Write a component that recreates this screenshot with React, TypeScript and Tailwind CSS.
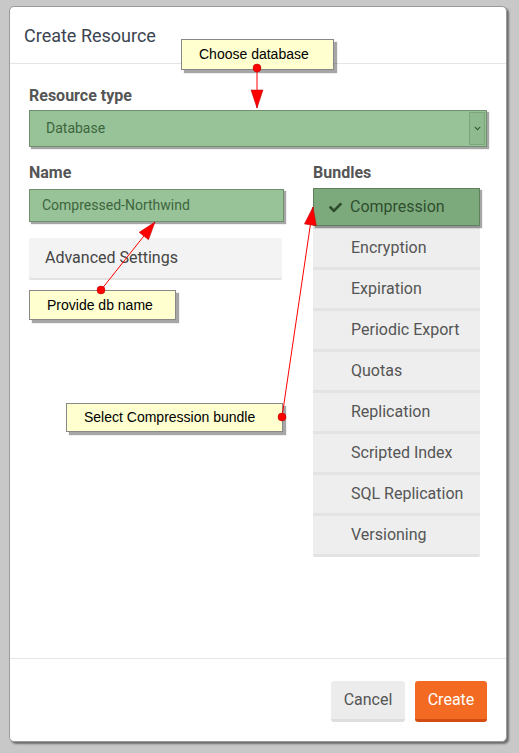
import { FaCheck, FaChevronDown } from 'react-icons/fa'

const bundles = [
  'Encryption',
  'Expiration',
  'Periodic Export',
  'Quotas',
  'Replication',
  'Scripted Index',
  'SQL Replication',
  'Versioning',
]

type Note = { text: string; x: number; y: number; w: number; h: number; pad: number }

const notes: Note[] = [
  { text: 'Choose database', x: 181, y: 39, w: 153, h: 31, pad: 17 },
  { text: 'Provide db name', x: 29, y: 290, w: 147, h: 30, pad: 17 },
  { text: 'Select Compression bundle', x: 66, y: 403, w: 217, h: 29, pad: 17 },
]

function arrowHead(x1: number, y1: number, x2: number, y2: number, len = 18, half = 6) {
  const dx = x2 - x1
  const dy = y2 - y1
  const d = Math.hypot(dx, dy)
  const ux = dx / d
  const uy = dy / d
  const bx = x2 - ux * len
  const by = y2 - uy * len
  return `${x2},${y2} ${bx - uy * half},${by + ux * half} ${bx + uy * half},${by - ux * half}`
}

const arrows = [
  { from: [257, 68], to: [257, 108] },
  { from: [101, 290], to: [155, 222] },
  { from: [282, 417], to: [313, 207] },
]

export default function App() {
  return (
    <div className="relative h-[753px] w-[519px] overflow-hidden bg-[#c8c8c8] font-['Roboto',sans-serif]">
      <div className="h-[6px]" />
      <div className="ml-[9px] flex h-[736px] w-[498px] flex-col rounded-[5px] border border-[#9a9a9a] bg-white shadow-[2px_2px_2px_rgba(0,0,0,0.45)]">
        <div className="flex h-[57px] shrink-0 items-center border-b border-[#e5e5e5] px-[14px]">
          <h1 className="text-[18px] text-[#3b4450]">Create Resource</h1>
        </div>

        <div className="flex-1 px-[19px] pt-[22px]">
          <div className="text-[16px] font-bold leading-[20px] text-[#555]">Resource type</div>
          <div className="mt-[4px] flex h-[37px] w-[458px] items-center justify-between border border-[#6f8f6f] bg-[#98c298] pl-[16px] shadow-[2px_2px_1px_rgba(0,0,0,0.35)]">
            <span className="text-[14px] text-[#3d663d]">Database</span>
            <div className="mr-[1px] flex h-[33px] w-[16px] items-center justify-center border border-[#7fa27f] bg-[#8fba8f]">
              <FaChevronDown className="h-[7px] w-[7px] text-[#2f552f]" />
            </div>
          </div>

          <div className="mt-[16px] flex gap-[29px]">
            <div className="w-[255px]">
              <div className="text-[16px] font-bold leading-[20px] text-[#555]">Name</div>
              <div className="mt-[6px] flex h-[33px] w-[255px] items-center border border-[#6f8f6f] bg-[#98c298] pl-[12px] shadow-[2px_2px_1px_rgba(0,0,0,0.35)]">
                <span className="text-[14px] text-[#3d663d]">Compressed-Northwind</span>
              </div>
              <div className="mt-[16px] flex h-[40px] w-[253px] items-center rounded-[2px] bg-[#f3f3f3] pl-[16px] shadow-[0_2px_0_#e2e2e2]">
                <span className="text-[16px] text-[#444]">Advanced Settings</span>
              </div>
            </div>

            <div className="w-[167px]">
              <div className="text-[16px] font-bold leading-[20px] text-[#555]">Bundles</div>
              <div className="mt-[5px] rounded-[2px] bg-[#e3e3e3] pb-[3px]">
                <div className="flex h-[38px] items-center gap-[8px] border border-[#5f7f5f] bg-[#7daa7d] pl-[15px] shadow-[2px_2px_1px_rgba(0,0,0,0.35)]">
                  <FaCheck className="h-[13px] w-[13px] text-[#2d4d2d]" />
                  <span className="text-[16px] text-[#2f4f2f]">Compression</span>
                </div>
                {bundles.map((b) => (
                  <div
                    key={b}
                    className="mt-[3px] flex h-[38px] items-center bg-[#eeeeee] pl-[38px] text-[16px] text-[#555]"
                  >
                    {b}
                  </div>
                ))}
              </div>
            </div>
          </div>
        </div>

        <div className="flex h-[83px] shrink-0 items-center justify-end gap-[10px] border-t border-[#e5e5e5] pr-[19px] pt-[2px]">
          <button className="h-[41px] w-[74px] rounded-[3px] border-b-[3px] border-[#dedede] bg-[#ececec] text-[16px] text-[#555]">
            Cancel
          </button>
          <button className="h-[41px] w-[72px] rounded-[3px] border-b-[3px] border-[#d24d14] bg-[#f36a22] text-[16px] text-white">
            Create
          </button>
        </div>
      </div>

      {notes.map((n) => (
        <div
          key={n.text}
          className="absolute flex items-center border border-[#888] bg-[#ffffd0] font-['Liberation_Sans',Arial,sans-serif] text-[14px] text-black shadow-[3px_3px_1px_rgba(0,0,0,0.35)]"
          style={{ left: n.x, top: n.y, width: n.w, height: n.h, paddingLeft: n.pad }}
        >
          {n.text}
        </div>
      ))}

      <svg className="pointer-events-none absolute left-0 top-0" width={519} height={753}>
        {arrows.map((a, i) => (
          <g key={i}>
            <line x1={a.from[0]} y1={a.from[1]} x2={a.to[0]} y2={a.to[1]} stroke="#ff0000" strokeWidth={1} />
            <polygon points={arrowHead(a.from[0], a.from[1], a.to[0], a.to[1])} fill="#ff0000" stroke="#b00000" strokeWidth={0.5} />
            <circle cx={a.from[0]} cy={a.from[1]} r={4} fill="#ff0000" stroke="#b00000" strokeWidth={0.5} />
          </g>
        ))}
      </svg>
    </div>
  )
}
